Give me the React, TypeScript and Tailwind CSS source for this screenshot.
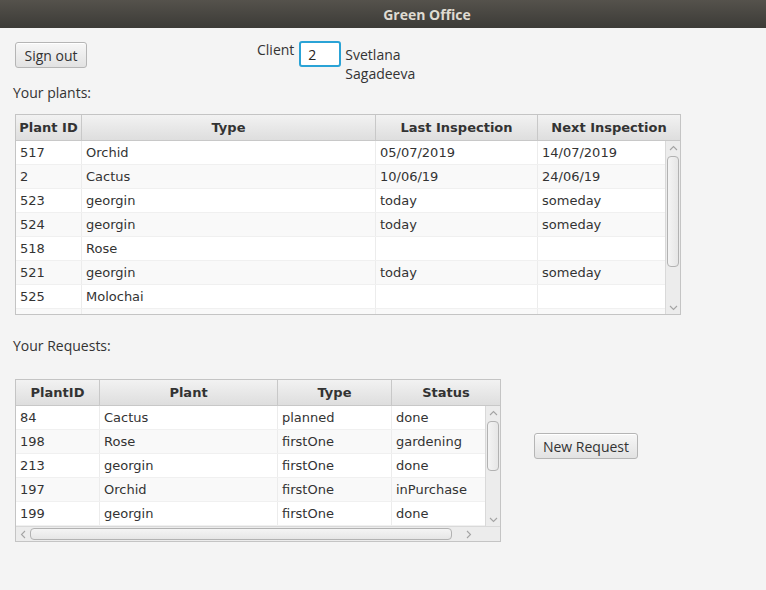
import React from 'react';

const label = { fontFamily: '"Open Sans", "Liberation Sans", sans-serif' };
const cell = { fontFamily: '"DejaVu Sans", sans-serif' };

type Col = { title: string; w: number };

const Chevron: React.FC<{ dir: 'up' | 'down' | 'left' | 'right' }> = ({ dir }) => {
  const pts = {
    up: '1,5 4.5,1.5 8,5',
    down: '1,2 4.5,5.5 8,2',
    left: '5,1 1.5,4.5 5,8',
    right: '2,1 5.5,4.5 2,8',
  }[dir];
  const vertical = dir === 'up' || dir === 'down';
  return (
    <svg width={vertical ? 9 : 7} height={vertical ? 7 : 9} viewBox={vertical ? '0 0 9 7' : '0 0 7 9'}>
      <polyline points={pts} fill="none" stroke="#a4a4a4" strokeWidth="1.1" />
    </svg>
  );
};

const VScroll: React.FC<{ thumbTop: number; thumbH: number }> = ({ thumbTop, thumbH }) => (
  <div className="w-[15px] shrink-0 bg-[#ececec] border-l border-[#d9d9d9] flex flex-col items-center">
    <div className="h-[12px] flex items-center justify-center mt-[1px]">
      <Chevron dir="up" />
    </div>
    <div className="flex-1 w-full relative">
      <div
        className="absolute left-[1px] w-[12px] rounded-[4px] border border-[#b2b2b2] bg-gradient-to-r from-[#f4f4f4] to-[#e6e6e6]"
        style={{ top: thumbTop, height: thumbH }}
      />
    </div>
    <div className="h-[12px] flex items-center justify-center mb-[1px]">
      <Chevron dir="down" />
    </div>
  </div>
);

const Header: React.FC<{ cols: Col[] }> = ({ cols }) => (
  <div className="flex h-[26px] bg-gradient-to-b from-[#f2f2f2] to-[#dedede] border-b border-[#c8c8c8]">
    {cols.map((c, i) => (
      <div
        key={c.title}
        className={`flex items-center justify-center text-[13px] font-bold text-[#333] ${i < cols.length - 1 ? 'border-r border-[#c8c8c8]' : 'flex-1'}`}
        style={{ ...cell, width: i < cols.length - 1 ? c.w : undefined }}
      >
        {c.title}
      </div>
    ))}
  </div>
);

const Rows: React.FC<{ cols: Col[]; rows: string[][] }> = ({ cols, rows }) => (
  <div className="flex-1 overflow-hidden">
    {rows.map((r, ri) => (
      <div
        key={ri}
        className={`flex h-[24px] border-b border-[#f0f0f0] ${ri % 2 === 1 ? 'bg-[#f9f9f9]' : 'bg-white'}`}
      >
        {cols.map((c, ci) => (
          <div
            key={ci}
            className={`flex items-center pl-[4px] text-[13px] text-[#333] whitespace-nowrap ${ci < cols.length - 1 ? 'border-r border-[#ececec]' : 'flex-1'}`}
            style={{ ...cell, width: ci < cols.length - 1 ? c.w : undefined }}
          >
            {r[ci]}
          </div>
        ))}
      </div>
    ))}
  </div>
);

const plantCols: Col[] = [
  { title: 'Plant ID', w: 66 },
  { title: 'Type', w: 294 },
  { title: 'Last Inspection', w: 162 },
  { title: 'Next Inspection', w: 142 },
];

const plants = [
  ['517', 'Orchid', '05/07/2019', '14/07/2019'],
  ['2', 'Cactus', '10/06/19', '24/06/19'],
  ['523', 'georgin', 'today', 'someday'],
  ['524', 'georgin', 'today', 'someday'],
  ['518', 'Rose', '', ''],
  ['521', 'georgin', 'today', 'someday'],
  ['525', 'Molochai', '', ''],
  ['', '', '', ''],
];

const reqCols: Col[] = [
  { title: 'PlantID', w: 84 },
  { title: 'Plant', w: 178 },
  { title: 'Type', w: 114 },
  { title: 'Status', w: 108 },
];

const requests = [
  ['84', 'Cactus', 'planned', 'done'],
  ['198', 'Rose', 'firstOne', 'gardening'],
  ['213', 'georgin', 'firstOne', 'done'],
  ['197', 'Orchid', 'firstOne', 'inPurchase'],
  ['199', 'georgin', 'firstOne', 'done'],
];

const Button: React.FC<{ children: React.ReactNode; className?: string }> = ({ children, className }) => (
  <button
    className={`h-[26px] rounded-[3px] border border-[#b5b5b5] bg-gradient-to-b from-[#f7f7f7] to-[#e2e2e2] text-[14px] text-[#333] shadow-[inset_0_1px_0_#ffffff] ${className ?? ''}`}
    style={label}
  >
    {children}
  </button>
);

export default function App() {
  return (
    <div className="w-[766px] h-[590px] bg-[#f4f4f4] flex flex-col overflow-hidden">
      <div
        className="h-[28px] shrink-0 bg-gradient-to-b from-[#55524c] to-[#3c3b37] flex items-center justify-center pl-[88px] text-[14px] font-bold text-[#dfdbd2]"
        style={label}
      >
        Green Office
      </div>

      <div className="flex items-start">
        <Button className="ml-[15px] mt-[14px] w-[72px]">Sign out</Button>
        <div className="flex items-start ml-[170px] mt-[13px]">
          <span className="text-[14px] text-[#333] leading-[18px]" style={label}>
            Client
          </span>
          <div className="ml-[5px] w-[42px] h-[26px] rounded-[3px] border-2 border-[#2aa3d6] bg-white flex items-center pl-[7px] text-[14px] text-[#222]" style={label}>
            2
          </div>
          <div className="ml-[4px] mt-[4px] text-[14px] leading-[19px] text-[#333]" style={label}>
            <div>Svetlana</div>
            <div>Sagadeeva</div>
          </div>
        </div>
      </div>

      <div className="ml-[13px] mt-[1px] text-[14px] leading-[18px] text-[#333]" style={label}>
        Your plants:
      </div>

      <div className="ml-[15px] mt-[12px] w-[666px] h-[201px] border border-[#c4c4c4] bg-white flex flex-col overflow-hidden">
        <Header cols={plantCols} />
        <div className="flex flex-1 overflow-hidden">
          <Rows cols={plantCols} rows={plants} />
          <VScroll thumbTop={2} thumbH={111} />
        </div>
      </div>

      <div className="ml-[13px] mt-[22px] text-[14px] leading-[18px] text-[#333]" style={label}>
        Your Requests:
      </div>

      <div className="flex items-start">
        <div className="ml-[15px] mt-[24px] w-[486px] h-[163px] border border-[#c4c4c4] bg-white flex flex-col overflow-hidden">
          <Header cols={reqCols} />
          <div className="flex flex-1 overflow-hidden">
            <Rows cols={reqCols} rows={requests} />
            <VScroll thumbTop={2} thumbH={50} />
          </div>
          <div className="h-[15px] shrink-0 flex bg-[#ececec] border-t border-[#d9d9d9]">
            <div className="flex-1 flex items-center">
              <div className="w-[14px] flex justify-center">
                <Chevron dir="left" />
              </div>
              <div className="w-[422px] h-[12px] rounded-[4px] border border-[#b2b2b2] bg-gradient-to-b from-[#f4f4f4] to-[#e6e6e6]" />
              <div className="flex-1 flex justify-center">
                <Chevron dir="right" />
              </div>
            </div>
            <div className="w-[15px] bg-[#ececec]" />
          </div>
        </div>
        <Button className="ml-[33px] mt-[78px] w-[104px]">New Request</Button>
      </div>
    </div>
  );
}
